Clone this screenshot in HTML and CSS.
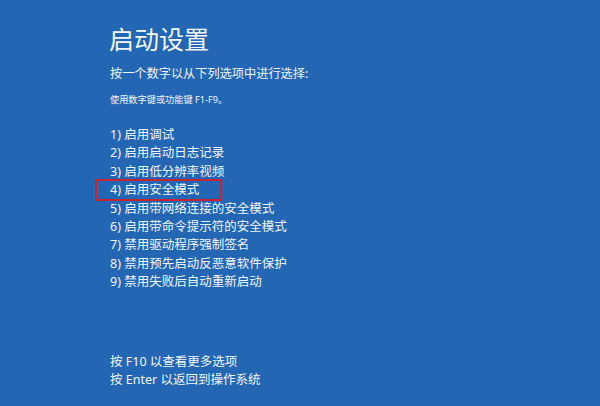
FILE: index.html
```html
<!DOCTYPE html>
<html lang="zh-CN">
<head>
<meta charset="utf-8">
<title>启动设置</title>
<link rel="stylesheet" href="styles.css">
</head>
<body>
<main class="screen">
  <h1 class="title">启动设置</h1>
  <p class="prompt">按一个数字以从下列选项中进行选择:</p>
  <p class="hint">使用数字键或功能键 F1-F9。</p>
  <ol class="options">
    <li>1) 启用调试</li>
    <li>2) 启用启动日志记录</li>
    <li>3) 启用低分辨率视频</li>
    <li class="selected"><span class="mark"></span>4) 启用安全模式</li>
    <li>5) 启用带网络连接的安全模式</li>
    <li>6) 启用带命令提示符的安全模式</li>
    <li>7) 禁用驱动程序强制签名</li>
    <li>8) 禁用预先启动反恶意软件保护</li>
    <li>9) 禁用失败后自动重新启动</li>
  </ol>
  <div class="footer">
    <p>按 F10 以查看更多选项</p>
    <p>按 Enter 以返回到操作系统</p>
  </div>
</main>
</body>
</html>
```
FILE: styles.css
```css
html, body {
  margin: 0;
  padding: 0;
}
body {
  width: 600px;
  height: 406px;
  overflow: hidden;
  background: #2366b4;
  color: #f2f6fb;
  font-family: "Noto Sans", "Noto Sans CJK SC", sans-serif;
}
.screen {
  display: flex;
  flex-direction: column;
  padding: 24px 0 0 110px;
}
.title {
  margin: 0 0 0 -1px;
  font-size: 25px;
  line-height: 30px;
  font-weight: 400;
}
.prompt {
  margin: 11px 0 0;
  font-size: 12.2px;
  line-height: 18px;
}
.hint {
  margin: 10px 0 0;
  font-size: 9.2px;
  line-height: 14px;
}
.options {
  list-style: none;
  margin: 19px 0 0;
  padding: 0;
  font-size: 12.5px;
  line-height: 18.4px;
}
.options li {
  position: relative;
}
.mark {
  position: absolute;
  left: -15px;
  top: -2px;
  width: 127px;
  height: 22px;
  box-sizing: border-box;
  border: 2px solid #c8232f;
}
.footer {
  margin-top: 61px;
  font-size: 12.5px;
  line-height: 18px;
}
.footer p {
  margin: 0;
}
```
